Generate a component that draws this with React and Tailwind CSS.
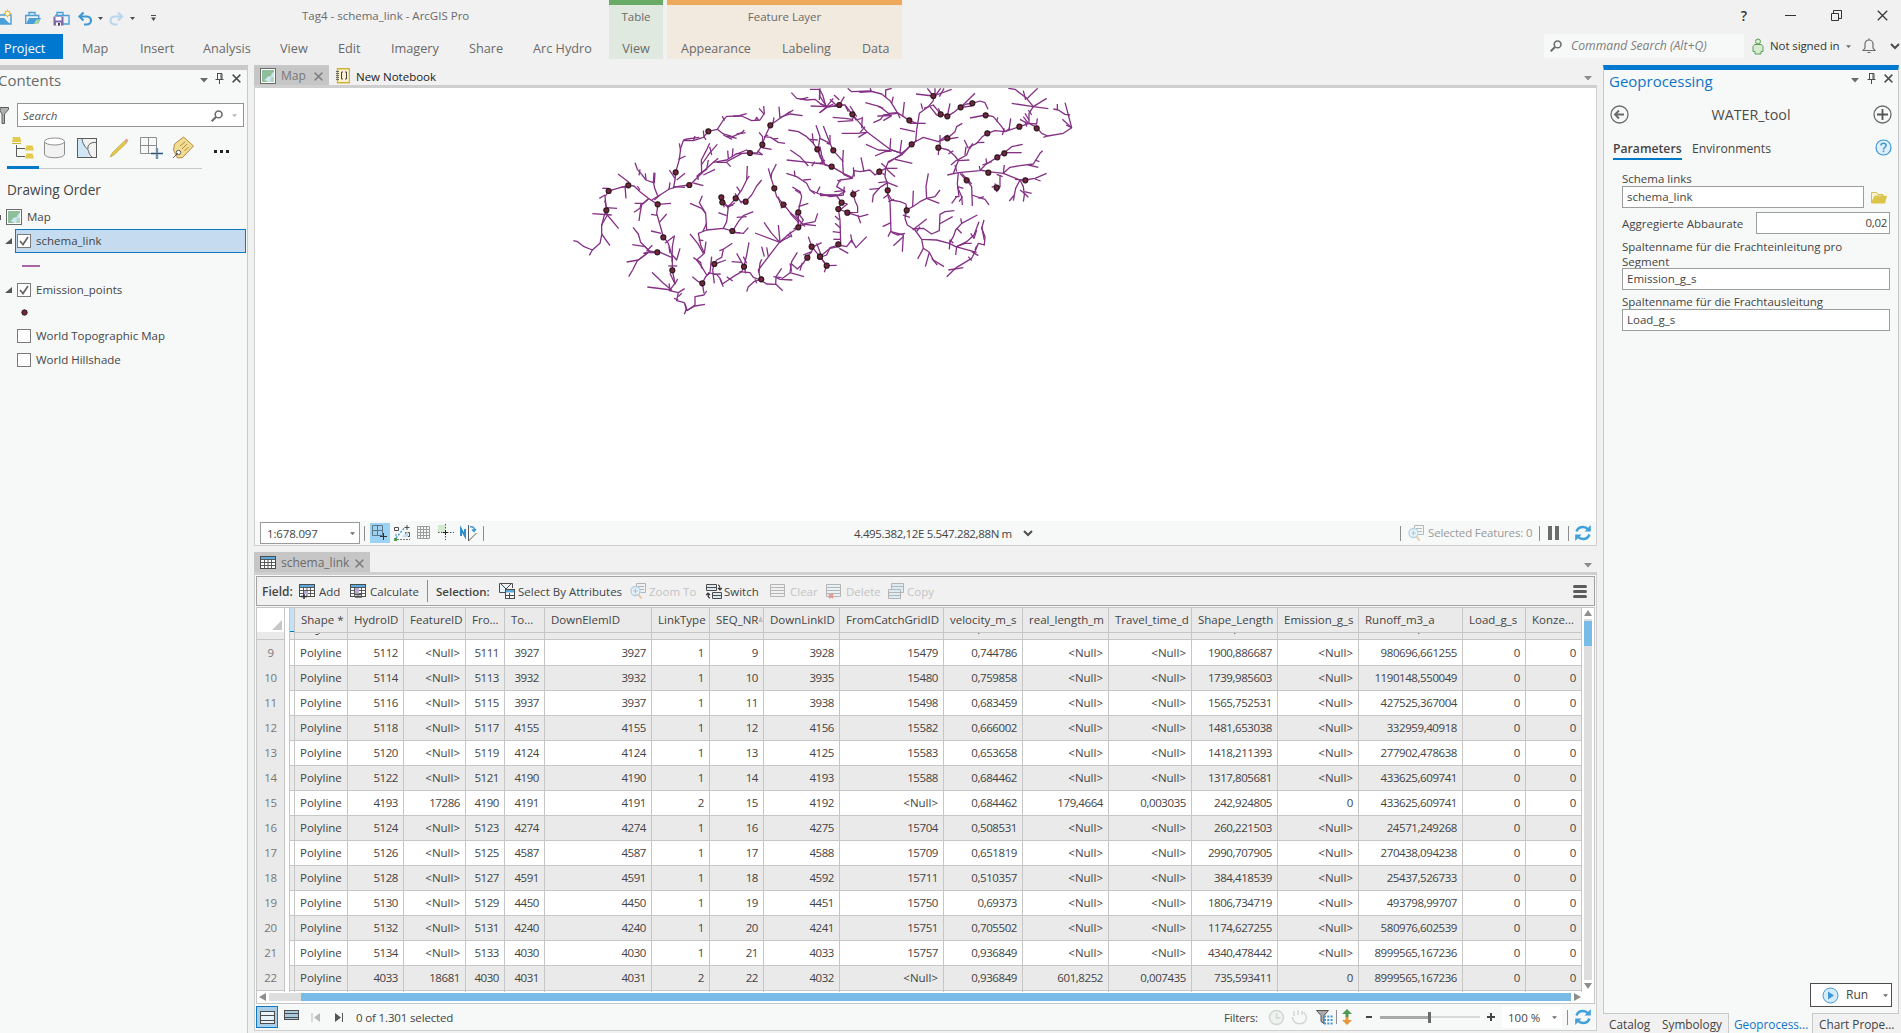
import React from "react";

/* ---------- small icons ---------- */
const Caret = ({ w = 9, color = "#6b6b6b", className = "" }) => (
  <svg width={w} height={w / 2 + 0.5} viewBox="0 0 10 5.5" className={"shrink-0 " + className}><path d="M0 0h10L5 5.5z" fill={color} /></svg>
);
const CloseX = ({ s = 9, color = "#4c4c4c", sw = 1.6, className = "" }) => (
  <svg width={s} height={s} viewBox="0 0 10 10" className={"shrink-0 " + className}><path d="M.7.7l8.6 8.6M9.3.7L.7 9.3" stroke={color} strokeWidth={sw} /></svg>
);
const Pin = () => (
  <svg width="9" height="11" viewBox="0 0 9 11" className="shrink-0"><path d="M2.5 0.5v6M2 .5h5M6 .5v6M7 .5v6M.5 6.5h8M4.5 7v4" stroke="#4c4c4c" fill="none" /></svg>
);
const Chevron = () => (
  <svg width="10" height="7" viewBox="0 0 10 7" className="shrink-0"><path d="M1 1l4 4 4-4" fill="none" stroke="#4c4c4c" strokeWidth="2" /></svg>
);
const Magnifier = ({ s = 12 }) => (
  <svg width={s} height={s} viewBox="0 0 12 12" className="shrink-0"><circle cx="7.6" cy="4.4" r="3.4" fill="none" stroke="#6b6b6b" strokeWidth="1.6" /><path d="M5 7L.7 11.3" stroke="#6b6b6b" strokeWidth="2" /></svg>
);
const MapIcon = () => (
  <svg width="16" height="16" viewBox="0 0 16 16" className="shrink-0">
    <rect x=".5" y=".5" width="15" height="15" fill="#fff" stroke="#6b6b6b" />
    <rect x="2" y="2" width="12" height="12" fill="#8fbf98" />
    <path d="M14 4l-2 1-1 3-4 1-1 2-2 1 3 1 1 1h4l1-4 1-1z" fill="#cfe6f4" />
    <path d="M11 9h3v5h-4z" fill="#b4d6c0" />
  </svg>
);
const Refresh = () => (
  <svg width="16" height="16" viewBox="0 0 16 16" className="shrink-0">
    <path d="M1.5 6.5C2.5 3.5 5 2 8 2c2 0 3.8.8 5 2.2M14.500 9.500C13.500 12.500 11 14 8 14c-2 0-3.800-.8-5-2.200" fill="none" stroke="#3fa0dc" strokeWidth="2.400" />
    <path d="M15.800 0v6.500H9.500zM.2 16V9.500h6.300z" fill="#3fa0dc" />
  </svg>
);
const TableIcon = ({ extra }) => (
  <svg width="16" height="16" viewBox="0 0 16 16" className="shrink-0">
    <rect x=".5" y="1.500" width="15" height="12" fill="#fff" stroke="#4c4c4c" />
    <rect x="1" y="2" width="14" height="2.500" fill="#5aaae0" />
    <path d="M1 4.500h14M1 7.500h14M1 10.500h14M4.500 4v9M8 4v9M11.500 4v9" stroke="#4c4c4c" strokeWidth=".9" />
    {extra}
  </svg>
);
const Rows = ({ w = 16, h = 13, fill = "#bfe3f5", stroke = "#4c4c4c", extra }) => (
  <svg width={w} height={h} viewBox={`0 0 ${w} ${h}`} className="shrink-0">
    <rect x=".5" y=".5" width={w - 1} height={h - 1} fill={fill} stroke={stroke} />
    <path d={`M1 ${Math.round(h / 3) + 0.5}h${w - 2}M1 ${Math.round((2 * h) / 3) + 0.5}h${w - 2}`} stroke={stroke} />
    {extra}
  </svg>
);
const ZoomIcon = () => (
  <svg width="16" height="16" viewBox="0 0 16 16" className="shrink-0" opacity=".5">
    <path d="M6.500 3.500v-3h9v9h-5M8 3.500h6M10 6.500h4" fill="none" stroke="#777" />
    <circle cx="5.500" cy="8" r="4.500" fill="#e4f2fa" stroke="#6fb0d8" strokeWidth="1.300" />
    <path d="M3 8h5M5.500 5.500v5" stroke="#5aa0cf" strokeWidth="1.200" />
    <path d="M8.500 11.500l3 4" stroke="#dba05f" strokeWidth="2" />
  </svg>
);

/* ---------- river network ---------- */
const WEST = [
  "40,482 53,485 72,500 97,510 120,490 125,465 125,435 142,405 139,385 135,350 146,333 205,316 222,318 240,335 265,355 282,366 293,373",
  "88,526 97,510", "150,497 125,462", "97,401 155,405", "176,446 142,405", "125,437 133,405 140,392", "138,383 171,385", "118,355 135,345", "127,325 146,325", "134,362 139,380 143,395",
  "198,355 195,318", "174,282 205,305 210,320 182,322", "232,318 240,330",
  "225,248 232,268 245,283 258,300 280,308 282,278", "280,305 284,325 293,347", "258,300 256,280", "237,286 240,268",
  "237,423 240,400 245,375 265,357", "222,397 240,385 243,372", "224,370 250,370 265,357", "285,278 283,310",
  "275,360 300,345 328,327 355,319 388,315 395,310 425,280 437,268 460,247 500,240 530,221 570,219 592,219 607,194 615,170 631,136 660,115 690,95",
  "340,325 345,300 347,277 358,238 362,205 370,182 400,182 430,172 445,154 472,148 490,120 500,109 535,108 560,101",
  "358,190 362,212", "370,180 382,177 418,172", "355,238 377,228", "350,300 375,280", "345,295 328,270", "327,328 330,307", "340,320 375,322",
  "472,148 490,162 518,170 545,158 553,150", "490,165 516,178", "500,168 530,175", "530,162 557,158", "487,108 493,122", "520,108 545,108 575,122 600,120 613,100 611,78", "597,85 613,103", "585,122 590,112 597,122", "430,152 432,170 438,180", "405,168 400,182",
  "425,283 424,240 437,215 449,190", "424,255 450,218 472,193", "449,200 455,225", "460,247 475,235", "430,285 465,268", "410,290 420,280 440,268 445,240", "400,309 430,317", "412,285 415,300", "470,247 500,247 512,260", "505,235 503,212", "517,228 519,205", "500,245 545,221", "530,222 560,210 570,216",
  "592,212 608,225", "575,220 607,224", "605,203 635,208", "607,195 608,170 597,157", "612,170 632,172 655,187 675,190", "640,177 655,175", "615,168 625,165", "631,136 640,125 642,112", "660,115 657,80", "660,112 690,102 728,107", "680,103 700,90",
  "283,360 300,345", "293,373 333,370", "293,380 290,400 300,435 310,470 325,490 337,530 337,570 345,610 328,632 355,638 350,662 373,668 380,692 405,678 435,673", "273,403 292,406", "298,427 320,402", "273,453 304,460", "315,490 343,468 337,500 336,545", "360,505 350,540 337,525", "327,500 330,520", "295,515 335,532", "325,558 352,558", "330,580 345,612 353,597",
  "219,442 235,462 242,487 268,513 290,517", "217,494 255,500 268,513", "200,546 235,540 268,515", "206,590 218,570 232,542 268,515 250,520", "260,513 277,496", "268,518 285,518",
  "276,577 310,610 335,630 262,621", "327,610 330,630", "355,638 374,626", "342,655 355,660", "365,640 355,650", "373,703 380,685 373,668", "380,692 405,675 405,650 432,645 440,633", "427,610 432,640", "397,590 415,605 427,610 437,590 450,578",
  "427,347 418,368 437,400 440,450 415,460 422,495 433,520 410,540 425,560 440,585 450,578", "390,370 425,385 437,400", "428,455 440,430", "390,462 413,490 430,520", "416,480 430,482", "433,520 438,485", "400,533 422,547 425,565",
  "440,450 490,445 517,453 530,458 550,460 565,443", "490,445 500,425 505,380 527,355 545,330 560,300 562,258", "475,398 500,407", "480,365 500,378 520,375", "560,298 568,288", "530,320 540,335", "484,352 505,385", "487,367 493,382", "540,365 557,365 575,345 590,318 605,300", "525,340 545,370", "505,382 525,368", "520,450 535,425 550,407 580,395", "530,412 560,410", "520,458 540,458",
  "463,552 470,540 485,532 490,508 517,490", "478,512 490,508", "463,552 458,570 463,610", "450,578 455,530", "470,550 498,540", "444,578 470,583 480,595 487,612 505,600 520,590 545,575 552,560 560,525 567,487", "515,545 545,547", "550,530 560,550", "530,520 552,560", "538,575 570,578 580,592 602,600", "553,560 557,580", "480,597 490,620", "462,583 482,582", "500,590 518,603",
  "602,600 595,570 610,550 660,485 690,460 705,450 715,440", "560,635 565,620 582,605 597,600", "585,598 590,610", "597,578 600,550 605,538", "605,500 613,530", "620,502 625,530", "612,427 635,460 660,487 585,459", "655,435 660,485", "660,487 670,480 690,470", "690,455 695,470 680,465", "715,440 700,447",
  "602,600 620,612 648,613 668,632", "647,613 648,590 665,565", "648,592 660,598 697,600", "640,590 665,593", "665,597 690,578 695,545 712,517", "690,578 732,590", "695,552 712,567 730,550 740,533 755,515 760,500 785,488", "720,572 727,548", "690,550 695,575",
  "625,265 632,290 643,325 650,350 670,372 690,397 715,420 715,440", "649,252 635,280 633,295", "655,350 660,370", "662,385 680,372", "715,397 715,440", "697,321 720,335 725,350 718,380 715,400", "705,330 722,340", "715,380 745,370", "715,400 730,420 720,435", "715,440 738,430 765,425 773,400", "725,432 768,437", "705,400 717,420 735,440", "690,400 718,430",
  "679,280 710,290 740,310 750,330 785,345 830,345", "705,290 703,272", "730,300 753,298", "780,320 770,340", "750,330 765,342",
  "680,240 745,247 790,252 815,260", "691,210 720,230 745,258", "755,258 765,245", "770,250 790,250", "685,150 715,155 740,170 760,190 772,208 780,230 790,250", "760,190 757,160", "768,136 780,170 775,205", "750,178 773,180", "772,205 790,250",
  "694,38 710,55 740,60 765,58 780,70 800,80", "752,78 800,80 837,78", "750,28 778,28 780,50 800,80 820,55", "780,25 778,60", "778,98 800,83", "720,58 745,52", "755,515 730,525", "755,500 745,470", "755,500 780,530 800,557", "770,490 785,530", "780,530 810,505 835,500",
];
const EAST = [
  "0,30 8,45 18,80", "0,98 18,82 58,75", "0,72 20,80", "18,82 40,72", "30,58 48,75 75,75 97,103 120,130 142,157 210,208 245,220 260,208 275,193 290,183 310,172 355,185 382,175 405,155 410,140 427,130", "42,45 58,60", "58,75 73,50", "75,75 85,95", "38,112 75,115 97,118 103,108", "53,125 100,122", "90,78 110,110", "65,160 110,160 142,157", "115,172 138,158", "97,103 108,120 125,115", "125,145 127,110", "120,158 135,140",
  "83,25 95,35 150,33 185,42 210,62 232,98 268,121 290,130", "118,37 155,35 150,25", "197,52 197,30 215,25", "136,68 180,80 205,100 232,98", "175,80 190,85", "160,128 182,118 190,105 232,100", "172,108 215,107", "215,70 220,50", "248,110 253,66", "232,97 240,115", "190,122 215,107",
  "288,42 340,48 395,28", "322,25 340,48 340,62 325,80 298,100 290,150 287,183", "345,25 345,48", "362,25 345,48", "372,25 358,50", "312,85 340,75 360,100 382,109 400,98 422,80 440,72 457,70", "355,85 362,100", "382,109 390,70", "422,82 465,40", "422,82 455,78", "457,70 480,63 495,68 504,88", "362,110 350,105 330,80", "303,70 308,88", "270,130 317,130", "240,145 285,155", "275,195 290,180",
  "138,193 175,210 210,212", "165,228 195,215 215,213", "210,210 212,175", "240,217 245,180", "245,220 210,208", "225,238 277,250", "205,248 245,222", "355,185 375,170 385,165", "357,200 355,225", "360,165 360,195", "357,203 385,210 405,228 415,242 400,280", "415,172 385,177", "415,242 448,240", "435,225 438,200", "405,255 410,275", "385,222 400,212", "393,255 410,240", "410,242 440,225 450,200 470,190 487,170 502,160 525,152 555,155 598,140 627,130 650,142 665,160 683,168 730,160 755,143 745,105 740,85 735,68", "433,180 445,205", "470,188 493,187", "450,205 458,190",
  "450,114 497,105 520,110 545,140 555,155", "547,165 553,145", "567,150 572,115", "530,125 533,112", "555,155 570,145", "615,125 620,140", "565,25 585,28 620,55 640,80 627,100 627,130", "575,70 640,80 685,86", "653,25 620,57", "610,32 617,60", "640,80 680,55", "625,90 635,105", "615,100 627,120", "600,118 625,132", "627,130 650,132 652,115", "625,130 610,110", "700,87 715,90 735,103 750,105", "712,72 712,90", "755,143 727,118", "755,143 738,135", "683,168 670,172",
  "415,278 480,272 495,255 530,233 553,218 575,200 608,193", "498,235 500,250", "555,218 605,218", "487,255 515,245", "480,270 505,275 550,280 600,300 615,300 645,295 680,280", "480,270 478,258", "550,280 553,255", "550,280 570,262 600,257 640,252 660,220 668,212", "625,255 655,262", "645,240 658,245", "600,300 587,325 583,345 568,363", "583,347 580,362", "600,300 610,320 613,345 610,365", "613,335 635,340", "600,330 613,340 625,352", "585,298 605,300", "540,285 540,320 530,322", "530,283 548,290", "525,310 530,335 540,320", "645,297 662,303", "515,322 530,315",
  "415,278 412,310 417,350 405,350", "395,370 410,350", "412,320 425,350 427,375", "430,290 440,300 455,320 457,378", "417,365 428,350", "455,345 495,358 507,375", "475,355 492,350", "420,280 438,300 450,305", "425,280 455,312", "412,320 430,325", "382,285 415,278",
  "275,193 245,225 205,245 197,265 178,275 165,285 150,270 120,275 103,272 97,295 70,283", "97,295 60,300 50,320 75,335 55,345 0,347", "123,232 132,275", "100,262 103,290", "197,265 232,265", "200,268 225,290", "197,265 195,290 202,310 203,345 210,365 213,455 250,465 247,515", "184,250 200,265", "187,280 195,285", "175,285 180,265", "175,308 203,305", "157,367 160,345 180,322 203,308", "148,328 180,325", "203,308 233,320", "203,345 190,355", "203,340 215,360 240,365 258,372 260,390 255,415 262,435 285,450 305,478 350,480 388,490 407,500 470,517", "205,365 222,358", "188,440 213,428", "204,470 213,452", "250,470 220,497", "215,457 232,465 255,460", "260,390 278,380 300,365 320,355 345,350 360,330", "278,378 280,332", "320,355 318,320 325,280", "320,355 358,370", "248,405 270,412", "255,410 258,380",
  "278,450 320,417", "280,447 310,445 335,462 358,452 360,403 375,395 403,392", "358,432 398,410", "290,455 300,440", "305,478 310,505 293,537", "310,505 328,517 316,560", "328,517 340,540 372,560", "335,535 352,555", "388,490 400,470 407,450 425,430 472,405", "425,430 422,415", "410,445 425,460", "388,508 390,480 400,490", "407,525 410,500 440,485 462,465 477,425", "410,500 435,490 455,490", "452,460 462,475 470,450", "492,420 485,445 495,470 493,495 475,490 465,515 455,535 410,562 380,590", "485,440 493,480", "455,515 475,527", "445,530 455,542", "385,570 430,563", "465,510 470,497",
  "70,283 68,245 70,210", "70,245 40,212 30,190 10,138", "0,175 30,190", "0,200 5,225 15,255 35,260 70,280 97,293", "20,190 30,192 30,165", "0,250 15,240", "52,300 62,305", "0,340 30,350 70,345 73,320", "50,348 65,367 55,387 60,420 62,490 55,495", "65,367 82,372 60,390", "82,397 55,387", "100,343 105,362 113,380 113,397 82,398", "90,345 118,330", "102,345 97,330", "82,398 120,410 145,403", "113,405 122,430", "45,408 58,420", "45,430 62,445", "40,478 62,478", "38,455 62,458", "55,495 30,503 20,525 0,532", "55,495 80,500 95,480 108,503 140,470", "58,505 85,520", "92,463 97,490", "20,557 50,556", "20,557 13,577", "20,557 0,530", "43,335 75,332",
];
const WDOTS = "445,154 631,136 607,194 570,219 347,277 388,315 205,316 146,333 139,391 293,373 310,472 292,517 337,571 427,610 463,552 552,560 604,598 484,352 487,367 527,355 557,365 517,453 643,325 670,374 715,397 715,442 742,533 755,500 780,530 772,208";
const EDOTS = "58,75 97,103 268,121 340,48 362,103 382,109 422,82 457,70 497,106 382,175 355,203 275,193 502,160 598,140 650,145 532,232 553,220 505,278 440,301 530,323 616,301 178,275 203,331 260,391 100,343 65,368 55,387 82,398 55,493 0,530 20,557 40,211 35,260";
const Dots = ({ d }) => d.split(" ").map((p) => {
  const [x, y] = p.split(",");
  return <circle key={p} cx={x} cy={y} r="7.500" fill="#74243c" stroke="#2b1a1e" strokeWidth="3.500" />;
});
const Network = () => (
  <svg className="block h-[433px] w-full" viewBox="255 88 1342 433" preserveAspectRatio="xMinYMin slice">
    <g fill="none" stroke="#843085" strokeWidth="3.900" strokeLinejoin="round">
      <g transform="translate(560 80) scale(.33333)">{WEST.map((p, i) => <polyline key={i} points={p} />)}<Dots d={WDOTS} /></g>
      <g transform="translate(820 80) scale(.33333)">{EAST.map((p, i) => <polyline key={i} points={p} />)}<Dots d={EDOTS} /></g>
    </g>
  </svg>
);

/* ---------- table data ---------- */
const N = "<Null>";
const HEAD = ["Shape *", "HydroID", "FeatureID", "Fro...", "To...", "DownElemID", "LinkType", "SEQ_NR", "DownLinkID", "FromCatchGridID", "velocity_m_s", "real_length_m", "Travel_time_d", "Shape_Length", "Emission_g_s", "Runoff_m3_a", "Load_g_s", "Konze..."];
const DATA = [
  ["5112", N, "5111", "3927", "3927", "1", "9", "3928", "15479", "0,744786", N, N, "1900,886687", N, "980696,661255"],
  ["5114", N, "5113", "3932", "3932", "1", "10", "3935", "15480", "0,759858", N, N, "1739,985603", N, "1190148,550049"],
  ["5116", N, "5115", "3937", "3937", "1", "11", "3938", "15498", "0,683459", N, N, "1565,752531", N, "427525,367004"],
  ["5118", N, "5117", "4155", "4155", "1", "12", "4156", "15582", "0,666002", N, N, "1481,653038", N, "332959,40918"],
  ["5120", N, "5119", "4124", "4124", "1", "13", "4125", "15583", "0,653658", N, N, "1418,211393", N, "277902,478638"],
  ["5122", N, "5121", "4190", "4190", "1", "14", "4193", "15588", "0,684462", N, N, "1317,805681", N, "433625,609741"],
  ["4193", "17286", "4190", "4191", "4191", "2", "15", "4192", N, "0,684462", "179,4664", "0,003035", "242,924805", "0", "433625,609741"],
  ["5124", N, "5123", "4274", "4274", "1", "16", "4275", "15704", "0,508531", N, N, "260,221503", N, "24571,249268"],
  ["5126", N, "5125", "4587", "4587", "1", "17", "4588", "15709", "0,651819", N, N, "2990,707905", N, "270438,094238"],
  ["5128", N, "5127", "4591", "4591", "1", "18", "4592", "15711", "0,510357", N, N, "384,418539", N, "25437,526733"],
  ["5130", N, "5129", "4450", "4450", "1", "19", "4451", "15750", "0,69373", N, N, "1806,734719", N, "493798,99707"],
  ["5132", N, "5131", "4240", "4240", "1", "20", "4241", "15751", "0,705502", N, N, "1174,627255", N, "580976,602539"],
  ["5134", N, "5133", "4030", "4030", "1", "21", "4033", "15757", "0,936849", N, N, "4340,478442", N, "8999565,167236"],
  ["4033", "18681", "4030", "4031", "4031", "2", "22", "4032", N, "0,936849", "601,8252", "0,007435", "735,593411", "0", "8999565,167236"],
];
const GRID = "grid grid-cols-[28px_5px_5px_53px_56px_62px_39px_40px_107px_58px_54px_76px_104px_79px_86px_83px_86px_81px_104px_63px_56px]";
const B = "border-[#c6c6c6]";
const NUM = "tracking-[-0.42px]";

const AttrTable = () => (
  <div className="flex h-[398px] border-b border-l border-t border-[#c6c6c6] bg-white">
    <div className="h-[384px] w-[1325px] overflow-hidden">
      <div className={GRID + " h-[24px] leading-[24px]"}>
        <div className={"flex items-end justify-end border-b border-r p-[2px] " + B}><svg width="10" height="10"><path d="M10 0v10H0z" fill="#c6c6c6" /></svg></div>
        <div className={"border-r " + B} />
        <div className="border-b-2 border-r border-b-[#0079cb] border-r-[#c6c6c6] bg-[#c5e1f5]" />
        {HEAD.map((h) => (
          <div key={h} className={"relative whitespace-nowrap border-b border-r bg-[#eaeaea] pl-[6px] " + B}>{h}
            {h === "SEQ_NR" && <svg width="5" height="6" className="absolute right-0 top-[8px]"><path d="M0 6l3-6 2 6z" fill="#c0c0c0" /></svg>}
          </div>
        ))}
      </div>
      <div className={GRID + " h-[8px]"}>
        {Array.from({ length: 21 }, (_, i) => (
          <div key={i} className={(i === 1 ? "border-r bg-white " : "border-b border-r bg-[#eaeaea] ") + B}>
            {i === 3 && <svg width="40" height="4" className="block"><path d="M25 .5L23 2.500h-2.500" fill="none" stroke="#4c4c4c" /></svg>}
            {(i === 13 || i === 16 || i === 18) && <svg width="70" height="3" className="block"><path d={i === 13 ? "M35.500 0l-1 2" : i === 16 ? "M43.500 0l-1 2" : "M60.500 0l-1 2"} stroke="#4c4c4c" /></svg>}
          </div>
        ))}
      </div>
      {DATA.map((r, i) => (
        <div key={i} className={GRID + " h-[25px] leading-[25px] " + (i % 2 ? "bg-[#eaeaea]" : "bg-white")}>
          <div className={"border-b border-r bg-[#eaeaea] text-center text-[#777] " + NUM + " " + B}>{i + 9}</div>
          <div className={"border-r bg-white " + B} />
          <div className={"border-b border-r " + B} />
          <div className={"border-b border-r pl-[5px] " + B}>Polyline</div>
          {[...r, "0", "0"].map((c, j) => <div key={j} className={"border-b border-r pr-[5px] text-right " + (c === N ? "" : NUM) + " " + B}>{c}</div>)}
        </div>
      ))}
      <div className={GRID + " h-[2px]"}>{Array.from({ length: 21 }, (_, i) => <div key={i} className={"border-r " + B} />)}</div>
    </div>
    <div className="flex w-[13px] flex-col items-center border-r border-[#c6c6c6]">
      <svg width="8" height="6" className="mt-[2px]"><path d="M0 6L4 0l4 6z" fill="#8e8e8e" /></svg>
      <div className="mt-[3px] h-[361px] w-[8px] bg-[#dedede] pt-[2px]"><div className="h-[25px] bg-[#78bbe6]" /></div>
      <svg width="8" height="6" className="mt-[3px]"><path d="M0 0h8L4 6z" fill="#8e8e8e" /></svg>
    </div>
  </div>
);

const Tool = ({ w, icon, label, off, gap = "gap-[4px]" }) => (
  <div className={"flex h-full shrink-0 items-center whitespace-nowrap " + gap + " " + w + (off ? " text-[#c3c3c3]" : "")}>{icon}<span className="pt-px">{label}</span></div>
);
const Sep = ({ className = "" }) => <div className={"w-px shrink-0 bg-[#8d8d8d] " + className} />;

const Check = ({ on }) => (
  <svg width="14" height="14" viewBox="0 0 14 14" className="shrink-0"><rect x=".5" y=".5" width="13" height="13" fill="#fff" stroke="#7a7a7a" />{on && <path d="M3 7l3 3.500L11 3" fill="none" stroke="#666" strokeWidth="1.700" />}</svg>
);

/* ---------- regions ---------- */
const TitleBar = () => (
  <div className="flex h-[65px]">
    <div className="flex w-[609px] flex-col">
      <div className="flex h-[34px] items-center">
        <svg width="160" height="34" viewBox="0 0 160 34" className="shrink-0">
          <path d="M0 15h11v9H0M25.700 24V15.500h13V18M29 15v-2.500h6V15M57 15v-2.500h6V15M55 15.500h14V24h-7" fill="none" stroke="#4a9fd8" strokeWidth="1.400" />
          <path d="M0 18l4 0 6 6H0zM26 24l3-6h12l-3 6z" fill="#4a9fd8" /><path d="M34 24l2-4 4-1-2 5z" fill="#a8d5a5" />
          <path d="M7.500 9.500v8M3.500 13.500h8M4.700 10.700l5.600 5.600M10.300 10.700l-5.600 5.600" stroke="#e0b93c" /><circle cx="7.500" cy="13.500" r="2.500" fill="#fff5c9" stroke="#d8b23a" />
          <path d="M53.500 16.500h10v9h-10z" fill="#8066a8" /><path d="M55.500 17h6v3.500h-6zM56 22.500h5v3h-5z" fill="#fff" /><path d="M58 23h2v2.500h-2z" fill="#444" />
          <path d="M83.500 12.500l-4 4 4 4M80 16.500h6.500a4.500 4 0 0 1 0 8h-2.500" fill="none" stroke="#3f97d3" strokeWidth="2.200" />
          <path d="M118 12.500l4 4-4 4M121.500 16.500h-6.500a4.500 4 0 0 0 0 8h2.500" fill="none" stroke="#b7d7eb" strokeWidth="2.200" />
          <path d="M98 17h5l-2.500 3zM130 17h5l-2.500 3zM151 17.500h5l-2.500 3.500z" fill="#4c4c4c" /><path d="M151 15.500h5" stroke="#4c4c4c" />
        </svg>
        <div className="ml-[142px] -mt-[2px] text-[#6a6a6a]">Tag4 - schema_link - ArcGIS Pro</div>
      </div>
      <div className="flex h-[25px] text-[12.7px] leading-[29px] text-[#6a6a6a]">
        <div className="w-[63px] bg-[#0078d0] pl-[4px] text-white">Project</div>
        <div className="ml-[19px] w-[58px]">Map</div><div className="w-[63px]">Insert</div><div className="w-[77px]">Analysis</div><div className="w-[58px]">View</div><div className="w-[53px]">Edit</div><div className="w-[78px]">Imagery</div><div className="w-[64px]">Share</div><div className="whitespace-nowrap">Arc Hydro</div>
      </div>
    </div>
    <div className="h-[59px] w-[54px] border-t-[5px] border-[#67ab67] bg-[#e0e9e0] text-center text-[#6a6a6a]">
      <div className="h-[29px] leading-[24px]">Table</div><div className="text-[12.7px] leading-[29px]">View</div>
    </div>
    <div className="ml-[4px] h-[59px] w-[235px] border-t-[5px] border-[#eea95d] bg-[#f2e9df] text-[#6a6a6a]">
      <div className="h-[29px] text-center leading-[24px]">Feature Layer</div>
      <div className="flex pl-[14px] text-[12.5px] leading-[29px]"><div className="w-[101px]">Appearance</div><div className="w-[80px]">Labeling</div><div>Data</div></div>
    </div>
    <div className="ml-auto flex w-[357px] flex-col">
      <div className="flex h-[34px] items-center justify-end pr-[13px] text-[#333]">
        <span className="mt-[-4px] text-[14px] font-semibold">?</span>
        <div className="ml-[38px] mt-[-3px] h-px w-[11px] bg-[#333]" />
        <svg width="11" height="11" viewBox="0 0 11 11" className="ml-[35px] -mt-[4px]"><path d="M.5 3.500h7v7h-7zM2.500 3V.5h8v8H8" fill="none" stroke="#333" /></svg>
        <CloseX s={11} color="#333" sw={1.1} className="ml-[35px] -mt-[4px]" />
      </div>
      <div className="flex h-[24px] items-center">
        <div className="flex h-[24px] w-[200px] items-center gap-[9px] bg-[#f7f9f8] pl-[6px] text-[12.200px] italic text-[#7d7d7d]"><Magnifier />Command Search (Alt+Q)</div>
        <svg width="12" height="17" viewBox="0 0 12 17" className="ml-[8px]"><circle cx="6" cy="3.500" r="2.500" fill="#d6ecd0" stroke="#5a9e58" /><path d="M1 8.500l1.500-2h7l1.500 2v5H9V16H3v-2.500H1z" fill="#d6ecd0" stroke="#5a9e58" /></svg>
        <span className="ml-[6px] w-[75px] whitespace-nowrap tracking-[-0.1px] text-[#333]">Not signed in</span>
        <Caret w={5} className="ml-px" />
        <svg width="14" height="16" viewBox="0 0 14 16" className="ml-[11px]"><path d="M1 12.500l2-2.500V6a4 4 0 0 1 8 0v4l2 2.500zM5.500 14.500h3M7 2V.5" fill="none" stroke="#6b6b6b" strokeWidth="1.200" /></svg>
        <div className="ml-[14px]"><Chevron /></div>
      </div>
    </div>
  </div>
);

const Contents = () => (
  <div className="flex w-[248px] flex-col border-r border-t-[5px] border-r-[#c9c9c9] border-t-[#c9c9c9] bg-[#f7f9f8]">
    <div className="flex h-[33px] items-start pr-[6px]">
      <div className="-ml-[2px] text-[15px] leading-[21px] text-[#6a6a6a]">Contents</div>
      <Caret w={8} className="ml-auto mt-[8px]" /><div className="ml-[7px] mt-[3px]"><Pin /></div><CloseX className="ml-[8px] mt-[4px]" />
    </div>
    <div className="flex h-[24px]">
      <svg width="9" height="17" className="mt-[4px]"><path d="M0 .5h8.500v2L4.500 7v9.500H2V7L0 4z" fill="#b0b0b0" stroke="#5c5c5c" /></svg>
      <div className="ml-[8px] flex w-[227px] items-center border border-[#949494] bg-white pl-[5px] pr-[6px] pt-px italic text-[#555]">Search<div className="ml-auto"><Magnifier /></div><Caret w={5} color="#b5b5b5" className="ml-[9px]" /></div>
    </div>
    <div className="ml-[7px] mt-[8px] flex h-[34px] w-[195px] items-start border-b border-[#c9c9c9]">
      <svg width="240" height="34" viewBox="7 135 240 34" className="shrink-0 overflow-visible">
        <path d="M13 137h7l1.500 5H12zM26.500 145.500h6l1.500 5h-9zM26.500 153.500h6l1.500 5h-9z" fill="#e3cc4c" /><path d="M12 143.500h9" stroke="#c9b235" /><path d="M16.500 145v11.500H25M16.500 148.500H25" fill="none" stroke="#5c5c5c" />
        <path d="M44.500 142v12c0 5 20 5 20 0v-12" fill="#f2f2f2" stroke="#8d8d8d" /><ellipse cx="54.500" cy="141.500" rx="10" ry="3.500" fill="#fff" stroke="#8d8d8d" />
        <rect x="77.500" y="138.500" width="19" height="19" fill="#f2f2f2" stroke="#5c5c5c" /><path d="M78 139h3l5 8 3 10H78z" fill="#cfe6f7" /><path d="M82 139c1 7 5 9 6 11s1 5 4 7M88 149c-1-5 4-7 8-6.500" fill="none" stroke="#5c5c5c" />
        <path d="M110 157l2.500-4.500L124.500 141l2 2L114 155z" fill="#e3c94c" stroke="#b9a03a" strokeWidth=".7" /><path d="M124.500 141l2-2.500 2 2-2 2.500z" fill="#e49a8c" />
        <path d="M140.500 137.500h16v16h-16zM148.500 137.500v16M140.500 145.500h16" fill="none" stroke="#8d8d8d" /><path d="M157 148v11M151 153.500h12" stroke="#a9d4f0" strokeWidth="3" /><path d="M157 148v11M151 153.500h12" stroke="#4c4c4c" />
        <path d="M173.500 150l1-6 9-7 10 9-11 11.500-5 .5z" fill="#f1dc93" stroke="#b98a3c" /><path d="M180 146l5-4M182 149l5-5M184.500 151l4-4" stroke="#b98a3c" /><circle cx="178.500" cy="152.500" r="2.200" fill="#fff" stroke="#5c5c5c" /><path d="M178 153l-5 5" stroke="#5c5c5c" />
        <path d="M214 150h3v3h-3zM220 150h3v3h-3zM226 150h3v3h-3z" fill="#222" />
        <path d="M7 166h32v3H7z" fill="#0078c8" />
      </svg>
    </div>
    <div className="h-[37px] pl-[7px] pt-[10px] text-[13.600px] leading-[22px] text-[#444]">Drawing Order</div>
    <div className="flex h-[23px] items-center gap-[5px] pb-px"><div className="h-[5px] w-px bg-[#555]" /><MapIcon />Map</div>
    <div className="flex h-[24px] items-center pl-[5px]">
      <svg width="7" height="6" className="shrink-0"><path d="M7 0v6H0z" fill="#555" /></svg>
      <div className="ml-[3px] flex h-[24px] w-[231px] items-center gap-[5px] border border-[#0f7ac4] bg-[#c5dcf0] pl-px"><Check on />schema_link</div>
    </div>
    <div className="flex h-[25px] items-center pl-[22px]"><div className="h-[2px] w-[18px] bg-[#a865a5]" /></div>
    <div className="flex h-[24px] items-center pl-[5px]"><svg width="7" height="6" className="shrink-0"><path d="M7 0v6H0z" fill="#555" /></svg><div className="ml-[5px] flex items-center gap-[5px]"><Check on />Emission_points</div></div>
    <div className="flex h-[22px] items-center pb-px pl-[21px]"><svg width="7" height="7"><circle cx="3.500" cy="3.500" r="2.700" fill="#7c2335" stroke="#222" /></svg></div>
    <div className="flex h-[24px] items-center gap-[5px] pl-[17px]"><Check />World Topographic Map</div>
    <div className="flex h-[24px] items-center gap-[5px] pl-[17px]"><Check />World Hillshade</div>
  </div>
);

const MapPane = () => (
  <div className="flex h-[481px] flex-col">
    <div className="flex h-[20px] items-center">
      <div className="flex h-[20px] w-[75px] items-center border-t border-[#c9c9c9] bg-[#c6c6c6] pl-[6px] pt-px text-[12px] text-[#787878]"><MapIcon /><span className="ml-[5px]">Map</span><CloseX color="#808080" className="ml-auto mr-[6px]" /></div>
      <svg width="14" height="16" viewBox="0 0 14 16" className="ml-[7px] mt-[2px]"><rect x="1.500" y=".7" width="12" height="14" fill="#fbf3cf" stroke="#d0b033" strokeWidth="1.400" /><path d="M0 3.500h3M0 5.500h3M0 7.500h3M0 9.500h3M0 11.500h3" stroke="#666" /><path d="M7 4H5.500v7H7M9 4h1.500v7H9" fill="none" stroke="#444" /></svg>
      <span className="ml-[6px] mt-[4px] text-[#222]">New Notebook</span>
      <Caret w={8} color="#8b8b8b" className="ml-auto mr-[5px] mt-[6px]" />
    </div>
    <div className="flex flex-1 flex-col border border-t-[3px] border-[#cfcfcf] bg-white">
      <Network />
      <div className="flex h-[24px] items-center bg-[#f7f9f8] pl-[5px]">
        <div className="flex h-[22px] w-[100px] shrink-0 items-center justify-between border border-[#9a9a9a] bg-white pl-[6px] pr-[4px] pt-px tracking-[-0.15px]">1:678.097<Caret w={5} /></div>
        <Sep className="ml-[4px] h-[15px]" />
        <svg width="112" height="20" viewBox="370 523 112 20" className="ml-[5px] shrink-0">
          <rect x="370" y="523" width="20" height="20" fill="#9cd2f3" />
          <path d="M372.500 525.500h10v10h-10zM377.500 525.500v10M372.500 530.500h10" fill="none" stroke="#5d7787" /><path d="M383.500 532v7M380 535.500h7" stroke="#333" transform="translate(0 1)" />
          <path d="M394.500 527.500h4v3h-4zM405.500 532.500h4v4h-4zM407 525v5M404.500 527.500h5" fill="none" stroke="#4c4c4c" /><path d="M396 538l9-11" stroke="#3f97d3" strokeDasharray="2 1.500" strokeWidth="1.400" /><path d="M397 539.500h13M396 534v3" stroke="#777" strokeDasharray="2 1" /><path d="M402 537l6-6v6z" fill="#b9dcf2" /><path d="M394 538h3v3h-3z" fill="#4d9a50" />
          <path d="M417.500 526.500h12v12h-12zM420.500 526.500v12M423.500 526.500v12M426.500 526.500v12M417.500 529.500h12M417.500 532.500h12M417.500 535.500h12" fill="none" stroke="#9a9a9a" />
          <path d="M438 525h7v7h-7z" fill="#d4ead0" /><path d="M445.500 524v16M438 532.500h16" stroke="#4c4c4c" strokeDasharray="1.500 1.500" /><path d="M445.500 530v5M443 532.500h5" stroke="#222" />
          <path d="M461 536v-7l4 7v-7" fill="none" stroke="#2f8fd0" strokeWidth="2" /><path d="M468.500 525v16l8-8" fill="none" stroke="#5c5c5c" /><path d="M470 527c3-1 5 1 4 4m-2-1.500l2 2 2-2.500" fill="none" stroke="#3f97d3" strokeWidth="1.500" />
        </svg>
        <Sep className="ml-[1px] h-[15px]" />
        <span className="ml-[370px] w-[169px] whitespace-nowrap pt-px tracking-[-0.35px]">4.495.382,12E 5.547.282,88N m</span><Chevron />
        <Sep className="ml-auto h-[15px]" />
        <div className="ml-[7px] flex w-[129px] items-center gap-[4px] whitespace-nowrap tracking-[-0.15px] text-[#9a9a9a]"><ZoomIcon />Selected Features: 0</div>
        <Sep className="ml-[2px] h-[15px]" /><div className="ml-[8px] flex gap-[3px]"><div className="h-[14px] w-[4px] bg-[#6b6b6b]" /><div className="h-[14px] w-[4px] bg-[#6b6b6b]" /></div>
        <Sep className="mx-[6px] ml-[9px] h-[15px]" /><Refresh /><div className="w-[5px]" />
      </div>
    </div>
  </div>
);

const TablePane = () => (
  <div className="mt-[6px] flex h-[479px] flex-col">
    <div className="flex h-[20px] items-center">
      <div className="flex h-[20px] w-[116px] items-center bg-[#c6c6c6] pl-[6px] pt-[2px] text-[#6c6c6c]"><TableIcon /><span className="ml-[5px] text-[12px]">schema_link</span><CloseX color="#808080" className="ml-auto mr-[6px]" /></div>
      <Caret w={8} color="#8b8b8b" className="ml-auto mr-[5px] mt-[7px]" />
    </div>
    <div className="flex flex-1 flex-col border border-t-[3px] border-[#cfcfcf] bg-[#f7f9f8] pl-px pr-px">
      <div className="mb-px mt-px flex h-[30px] items-center border border-[#a3a3a3] bg-[#f1f1f1] pl-[5px]">
        <span className="w-[37px] pt-px text-[12px] font-semibold">Field:</span>
        <Tool w="w-[51px]" label="Add" icon={<TableIcon extra={<><path d="M5 8h4v3H5z" fill="#b9a7d6" /><path d="M5 11v6M2 13.500h6" stroke="#333" strokeWidth="1.500" /></>} />} />
        <Tool w="w-[78px]" label="Calculate" icon={<TableIcon extra={<><path d="M5 5h4v6H5z" fill="#b9a7d6" /><path d="M5 11.500h7M5 14h7" stroke="#555" strokeWidth="1.500" /></>} />} />
        <Sep className="-ml-px mr-px h-[22px]" />
        <span className="ml-[7px] w-[63px] pt-px font-semibold">Selection:</span>
        <Tool w="w-[131px]" gap="gap-[3px]" label="Select By Attributes" icon={<svg width="16" height="16" className="shrink-0"><path d="M9 .5h4.500V5M7 9.500H.5v-9H9M2 1l5 5 5-5" fill="#e8f3fa" stroke="#4c4c4c" /><rect x="6.500" y="6.500" width="9" height="9" fill="#fff" stroke="#4c4c4c" /><path d="M7 7h8v2.500H7z" fill="#5aaae0" /><path d="M7 12.500h8M10.500 10v5" stroke="#4c4c4c" /></svg>} />
        <Tool w="w-[76px]" gap="gap-[3px]" off label="Zoom To" icon={<ZoomIcon />} />
        <Tool w="w-[64px]" gap="gap-[2px]" label="Switch" icon={<svg width="16" height="16" className="shrink-0"><path d="M.5 1.500h10v6H.5zM1 4.500h9M6.500 9.500h9v6h-9zM7 12.500h8" fill="#dceaf3" stroke="#4c4c4c" /><path d="M12 2c2 0 2 2 2 5m-2-2l2 2 2-2M4 15c-2 0-2-2-2-5M0 12l2-2 2 2" fill="none" stroke="#333" strokeWidth="1.200" /></svg>} />
        <Tool w="w-[56px]" off label="Clear" icon={<svg width="16" height="14" className="shrink-0"><path d="M.5.5h14v12H.5zM1 3.500h13M1 6.500h13M1 9.500h13" fill="none" stroke="#b5b5b5" /></svg>} />
        <Tool w="w-[62px]" off label="Delete" icon={<svg width="16" height="16" className="shrink-0"><path d="M.5 1.500h14v12H.5zM1 4.500h13M1 7.500h13M1 10.500h13" fill="#e6f1f8" stroke="#b5b5b5" /><path d="M3 11l4 4M7 11l-4 4" stroke="#e09a90" strokeWidth="2" /></svg>} />
        <Tool w="w-[60px]" gap="gap-[3px]" off label="Copy" icon={<svg width="16" height="16" className="shrink-0"><path d="M3.500.5h12v9h-12zM4 3.500h11" fill="#dcecf5" stroke="#b5b5b5" /><path d="M.5 6.500h12v9H.5zM1 9.500h11M1 12.500h11" fill="#dcecf5" stroke="#b5b5b5" /></svg>} />
        <div className="ml-auto mr-[7px] flex flex-col gap-[2px]"><div className="h-[3px] w-[14px] rounded-sm bg-[#5c5c5c]" /><div className="h-[3px] w-[14px] rounded-sm bg-[#5c5c5c]" /><div className="h-[3px] w-[14px] rounded-sm bg-[#5c5c5c]" /></div>
      </div>
      <div className="flex h-[397px] flex-col border-b border-[#c6c6c6] bg-white">
        <div className="h-[385px] overflow-hidden"><AttrTable /></div>
        <div className="flex h-[11px] items-start border-l border-r border-[#c6c6c6] pl-[2px] pt-px">
          <svg width="7" height="8"><path d="M7 0v8L0 4z" fill="#8e8e8e" /></svg>
          <div className="ml-[3px] h-[8px] w-[32px] bg-[#dedede]" /><div className="h-[8px] w-[1270px] bg-[#78bbe6]" />
          <svg width="7" height="8" className="ml-[3px]"><path d="M0 0v8l7-4z" fill="#8e8e8e" /></svg>
        </div>
      </div>
      <div className="flex h-[26px] items-center">
        <div className="flex h-[22px] w-[22px] items-center justify-center border border-[#0f78c4] bg-[#a9cfe8]"><Rows w={15} h={13} fill="#e9f5fc" /></div>
        <div className="-mt-[5px] ml-[6px]"><Rows w={15} h={10} fill="#a9c9df" /></div>
        <svg width="34" height="9" className="ml-[12px]"><path d="M1 0v9" stroke="#b9b9b9" /><path d="M9 0v9L3 4.500z" fill="#b9b9b9" /><path d="M24 0v9l6-4.500z" fill="#555" /><path d="M31.500 0v9" stroke="#555" /></svg>
        <span className="ml-[11px] pt-px tracking-[-0.15px]">0 of 1.301 selected</span>
        <span className="ml-auto w-[41px] pt-px tracking-[-0.2px]">Filters:</span>
        <svg width="70" height="18" viewBox="1264 1008 70 18"><g fill="none" stroke="#d2d6d3"><circle cx="1275.500" cy="1017.500" r="7" strokeWidth="1.500" fill="#eef3ee" /><path d="M1275.500 1013v5h4M1293 1011v5M1297 1010v5M1301 1011v4" strokeWidth="1.500" /><path d="M1291.500 1017c0 9 14 9 14 0-1-3-2-4-3-5" strokeWidth="1.500" /></g><path d="M1315.500 1010.500h12l-4.500 5v8l-3-2v-6z" fill="#aaa" stroke="#555" /><path d="M1323 1016.500h9M1323 1020h9M1323 1023.500h9" stroke="#3f97d3" strokeWidth="2" strokeDasharray="2 1.300" /></svg>
        <Sep className="ml-[1px] h-[14px]" />
        <svg width="10" height="16" className="ml-[5px]"><path d="M5 0l5 5H6.500v3h-3V5H0z" fill="#4d9a50" /><path d="M5 16l5-5H6.500V8h-3v3H0z" fill="#e8983c" /></svg>
        <div className="ml-[14px] h-[2px] w-[6px] bg-[#444]" /><div className="ml-[8px] h-[3px] w-[48px] bg-[#a9a9a9]" /><div className="h-[11px] w-[3px] bg-[#6b6b6b]" /><div className="h-[2px] w-[49px] bg-[#d9d9d9]" />
        <svg width="8" height="8" className="ml-[7px]"><path d="M4 0v8M0 4h8" stroke="#444" strokeWidth="2" /></svg>
        <div className="ml-[7px] flex h-[22px] w-[60px] items-center justify-between bg-white pl-[6px] pr-[5px] pt-px">100 %<Caret w={5} /></div>
        <Sep className="ml-[5px] mr-[7px] h-[15px]" /><Refresh /><div className="w-[4px]" />
      </div>
    </div>
  </div>
);

const Input = ({ children, className = "" }) => <div className={"flex h-[22px] items-center border border-[#9d9d9d] bg-white " + className}>{children}</div>;

const Geo = () => (
  <div className="ml-[6px] flex w-[296px] flex-col">
    <div className="flex h-[949px] flex-col border border-t-[5px] border-[#c9c9c9] border-t-[#0078d0] bg-[#f7f9f8]">
      <div className="flex h-[30px] items-start pl-[5px] pr-[5px]"><div className="text-[15px] leading-[22px] text-[#0f74c8]">Geoprocessing</div><Caret w={8} className="ml-auto mt-[8px]" /><div className="ml-[8px] mt-[3px]"><Pin /></div><CloseX className="ml-[8px] mt-[4px]" /></div>
      <div className="flex h-[29px] items-center justify-between pl-[6px] pr-[6px]">
        <svg width="19" height="19" viewBox="0 0 19 19"><circle cx="9.500" cy="9.500" r="8.500" fill="none" stroke="#6b6b6b" strokeWidth="1.300" /><path d="M14 9.500H5.500M9 5.500l-4 4 4 4" fill="none" stroke="#6b6b6b" strokeWidth="1.800" /></svg>
        <span className="text-[14.300px] text-[#4c4c4c]">WATER_tool</span>
        <svg width="19" height="19" viewBox="0 0 19 19"><circle cx="9.500" cy="9.500" r="8.500" fill="none" stroke="#6b6b6b" strokeWidth="1.300" /><path d="M9.500 4v11M4 9.500h11" stroke="#555" strokeWidth="1.800" /></svg>
      </div>
      <div className="mt-[7px] flex h-[27px] items-start pl-[9px] pr-[6px] text-[12.200px]">
        <div className="h-[24px] w-[69px] border-b-2 border-[#0078c8] font-semibold leading-[25px]">Parameters</div><div className="ml-[10px] leading-[25px]">Environments</div>
        <svg width="17" height="17" viewBox="0 0 17 17" className="ml-auto mt-[3px]"><circle cx="8.500" cy="8.500" r="7.500" fill="#dff0fb" stroke="#3f97d3" strokeWidth="1.200" /><path d="M6 6.500C6 3.500 11 3.500 11 6.500c0 2-2.500 2-2.500 4M8.500 11.500v1.800" fill="none" stroke="#3f97d3" strokeWidth="1.600" /></svg>
      </div>
      <div className="flex flex-col pl-[18px] pr-[8px]">
        <div className="mt-[8px] leading-[15px]">Schema links</div>
        <div className="flex items-center"><Input className="w-[242px] pl-[4px]">schema_link</Input><svg width="16" height="13" viewBox="0 0 16 13" className="ml-[7px]"><path d="M.5 12V1.500h5l1.500 2h5V5H4z" fill="#faf3d0" stroke="#d6c04a" /><path d="M3.500 5.500l-3 7H14l2-7.500c-3-.5-4 .5-12.500.5z" fill="#dcc448" /></svg></div>
        <div className="mt-[4px] flex items-center justify-between"><span className="pt-px">Aggregierte Abbaurate</span><Input className="w-[134px] justify-end pr-[2px] tracking-[-0.3px]">0,02</Input></div>
        <div className="mt-[5px] leading-[15px]">Spaltenname für die Frachteinleitung pro<br />Segment</div>
        <Input className="mt-[-1px] pl-[4px]">Emission_g_s</Input>
        <div className="mt-[4px] leading-[15px]">Spaltenname für die Frachtausleitung</div>
        <Input className="pl-[4px]">Load_g_s</Input>
      </div>
      <div className="mb-[6px] ml-auto mr-[6px] mt-auto flex h-[24px] w-[82px] items-center border border-[#4c4c4c] bg-white pl-[11px] text-[12px]">
        <svg width="17" height="17" viewBox="0 0 17 17"><circle cx="8.500" cy="8.500" r="7.500" fill="#d4ebf9" stroke="#3f97d3" /><path d="M6 4.500v8l6-4z" fill="#3f97d3" /></svg><span className="ml-[7px]">Run</span><Caret w={5} className="ml-auto mr-[3px]" />
      </div>
    </div>
    <div className="flex h-[19px] text-[11.800px] leading-[20px]">
      <div className="w-[54px] pl-[6px]">Catalog</div><div className="w-[72px] border-r border-[#c9c9c9] pl-[5px]">Symbology</div><div className="-mt-px w-[83px] bg-[#f7f9f8] pl-[5px] pt-px text-[#0f74c8]">Geoprocess...</div><div className="whitespace-nowrap border-l border-[#c9c9c9] pl-[6px]">Chart Prope...</div>
    </div>
  </div>
);

export default function App() {
  return (
    <div className="h-[1033px] w-[1901px] overflow-hidden bg-[#f1f1f1] font-['Open_Sans','Noto_Sans',sans-serif] text-[11.500px] text-[#444]">
      <TitleBar />
      <div className="flex h-[968px]">
        <Contents />
        <div className="ml-[6px] w-[1343px]"><MapPane /><TablePane /></div>
        <Geo />
      </div>
    </div>
  );
}
